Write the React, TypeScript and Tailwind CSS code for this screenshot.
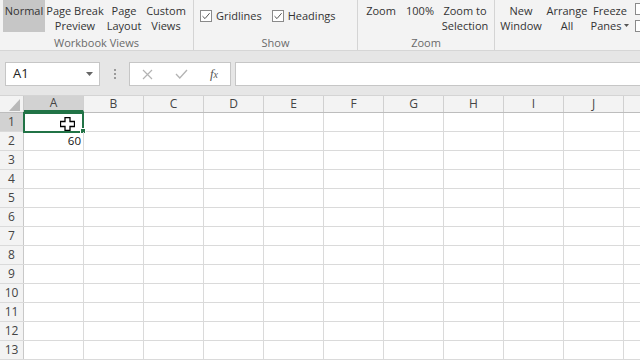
import React from "react";

const cols = ["A", "B", "C", "D", "E", "F", "G", "H", "I", "J"];
const rows = Array.from({ length: 13 }, (_, i) => i + 1);

const RibbonButton = ({
  lines,
  width,
  active,
}: {
  lines: string[];
  width: string;
  active?: boolean;
}) => (
  <div
    className={`${width} shrink-0 h-[32px] flex flex-col items-center pt-[3px] leading-[15px] text-center whitespace-nowrap ${
      active ? "bg-[#c6c6c6]" : ""
    }`}
  >
    {lines.map((l, i) => (
      <span key={i}>{l}</span>
    ))}
  </div>
);

const Check = ({ label }: { label: string }) => (
  <div className="flex items-center gap-[4px]">
    <div className="w-[12px] h-[12px] border border-[#8a8a8a] bg-white flex items-center justify-center">
      <svg width="10" height="10" viewBox="0 0 10 10">
        <path d="M1.5 5.2 L4 7.6 L8.6 2.2" fill="none" stroke="#555" strokeWidth="1" />
      </svg>
    </div>
    <span>{label}</span>
  </div>
);

const Group = ({
  width,
  label,
  children,
  border = true,
}: {
  width: string;
  label: string;
  children: React.ReactNode;
  border?: boolean;
}) => (
  <div className={`${width} shrink-0 h-full flex flex-col ${border ? "border-r border-[#d4d4d4]" : ""}`}>
    <div className="h-[36px] flex items-start">{children}</div>
    <div className="flex-1 text-center text-[#6a6a6a] leading-[15px]">{label}</div>
  </div>
);

const Cursor = () => (
  <svg width="15" height="14" viewBox="0 0 15 14" className="absolute left-[36px] top-[4px]">
    <path
      d="M5 0.5 H10 V4.5 H14.5 V9.5 H10 V13.5 H5 V9.5 H0.5 V4.5 H5 Z"
      fill="#fff"
      stroke="#000"
      strokeWidth="1.3"
    />
  </svg>
);

export default function App() {
  return (
    <div
      className="w-[640px] h-[360px] overflow-hidden bg-white text-[#333] text-[11px]"
      style={{ fontFamily: '"Open Sans", "Noto Sans", sans-serif' }}
    >
      {/* Ribbon */}
      <div className="h-[51px] bg-[#f3f3f3] border-b border-[#d6d6d6] flex">
        <Group width="w-[194px]" label="Workbook Views">
          <div className="flex pl-[3px]">
            <RibbonButton lines={["Normal"]} width="w-[42px]" active />
            <RibbonButton lines={["Page Break", "Preview"]} width="w-[60px]" />
            <RibbonButton lines={["Page", "Layout"]} width="w-[38px]" />
            <RibbonButton lines={["Custom", "Views"]} width="w-[46px]" />
          </div>
        </Group>
        <Group width="w-[164px]" label="Show">
          <div className="flex gap-[10px] pl-[6px] pt-[8px]">
            <Check label="Gridlines" />
            <Check label="Headings" />
          </div>
        </Group>
        <Group width="w-[137px]" label="Zoom">
          <div className="flex pl-[4px]">
            <RibbonButton lines={["Zoom"]} width="w-[38px]" />
            <RibbonButton lines={["100%"]} width="w-[40px]" />
            <RibbonButton lines={["Zoom to", "Selection"]} width="w-[50px]" />
          </div>
        </Group>
        <Group width="w-[145px]" label="" border={false}>
          <div className="flex pl-[3px]">
            <RibbonButton lines={["New", "Window"]} width="w-[46px]" />
            <RibbonButton lines={["Arrange", "All"]} width="w-[46px]" />
            <div className="w-[40px] shrink-0 h-[32px] flex flex-col items-center pt-[3px] leading-[15px] whitespace-nowrap">
              <span>Freeze</span>
              <span className="flex items-center gap-[3px]">
                Panes
                <svg width="5" height="3" viewBox="0 0 5 3">
                  <path d="M0 0 H5 L2.5 3 Z" fill="#555" />
                </svg>
              </span>
            </div>
            <div className="ml-[5px] shrink-0 flex flex-col gap-[5px] pt-[3px]">
              <div className="w-[12px] h-[12px] border border-[#8a8a8a] bg-white" />
              <div className="w-[12px] h-[12px] border border-[#8a8a8a] bg-white" />
            </div>
          </div>
        </Group>
      </div>

      {/* Formula bar */}
      <div className="h-[44px] bg-[#e6e6e6] flex pt-[11px] pl-[5px]">
        <div className="w-[95px] h-[24px] bg-white border border-[#c6c6c6] flex items-center justify-between pl-[7px] pr-[6px] text-[13px] text-[#222]">
          <span>A1</span>
          <svg width="7" height="4" viewBox="0 0 7 4">
            <path d="M0 0 H7 L3.5 4 Z" fill="#666" />
          </svg>
        </div>
        <div className="w-[29px] h-[24px] flex flex-col items-center justify-center gap-[2px]">
          <div className="w-[2px] h-[2px] bg-[#9a9a9a]" />
          <div className="w-[2px] h-[2px] bg-[#9a9a9a]" />
          <div className="w-[2px] h-[2px] bg-[#9a9a9a]" />
        </div>
        <div className="w-[102px] h-[24px] bg-white border border-[#c6c6c6] flex items-center">
          <div className="w-[34px] flex justify-center">
            <svg width="11" height="11" viewBox="0 0 11 11">
              <path d="M1 1 L10 10 M10 1 L1 10" stroke="#b3b3b3" strokeWidth="1.2" />
            </svg>
          </div>
          <div className="w-[34px] flex justify-center">
            <svg width="13" height="10" viewBox="0 0 13 10">
              <path d="M1 5 L4.8 9 L12 1" fill="none" stroke="#b3b3b3" strokeWidth="1.3" />
            </svg>
          </div>
          <div
            className="w-[32px] text-center text-[#555] text-[13px] italic"
            style={{ fontFamily: '"Liberation Serif", serif' }}
          >
            f<span className="text-[10px]">x</span>
          </div>
        </div>
        <div className="flex-1 ml-[4px] h-[24px] bg-white border border-[#c6c6c6] border-r-0" />
      </div>

      {/* Grid */}
      <div className="flex flex-col text-[#444] text-[12px]">
        <div className="flex h-[18px] bg-[#f3f3f3] border-t border-[#d4d4d4] border-b border-b-[#bdbdbd]">
          <div className="w-[24px] shrink-0 border-r border-[#c8c8c8] flex items-end justify-end pr-[3px] pb-[1px]">
            <svg width="11" height="12" viewBox="0 0 11 12">
              <path d="M11 0 V12 H0 Z" fill="#b9b9b9" />
            </svg>
          </div>
          {cols.map((c) => (
            <div
              key={c}
              className={`w-[60px] shrink-0 border-r border-[#d0d0d0] flex items-center justify-center leading-none ${
                c === "A" ? "bg-[#d2d2d2] border-b-2 border-b-[#217346]" : ""
              }`}
            >
              {c}
            </div>
          ))}
          <div className="flex-1" />
        </div>
        {rows.map((r) => (
          <div key={r} className="flex h-[19px] border-b border-[#dadada]">
            <div
              className={`w-[24px] shrink-0 border-r border-[#c8c8c8] flex items-center justify-center leading-none ${
                r === 1 ? "bg-[#d2d2d2]" : "bg-[#f3f3f3]"
              }`}
            >
              {r}
            </div>
            {cols.map((c) => (
              <div
                key={c}
                className="w-[60px] shrink-0 border-r border-[#dadada] relative flex items-center justify-end pr-[2px] text-[11.5px] text-[#111]"
              >
                {c === "A" && r === 2 ? "60" : ""}
                {c === "A" && r === 1 && (
                  <>
                    <div className="absolute left-[-1px] top-[-1px] w-[61px] h-[21px] border-2 border-[#217346]" />
                    <div className="absolute right-[-3px] bottom-[-3px] w-[6px] h-[6px] bg-[#217346] border border-white" />
                    <Cursor />
                  </>
                )}
              </div>
            ))}
            <div className="flex-1" />
          </div>
        ))}
      </div>
    </div>
  );
}
